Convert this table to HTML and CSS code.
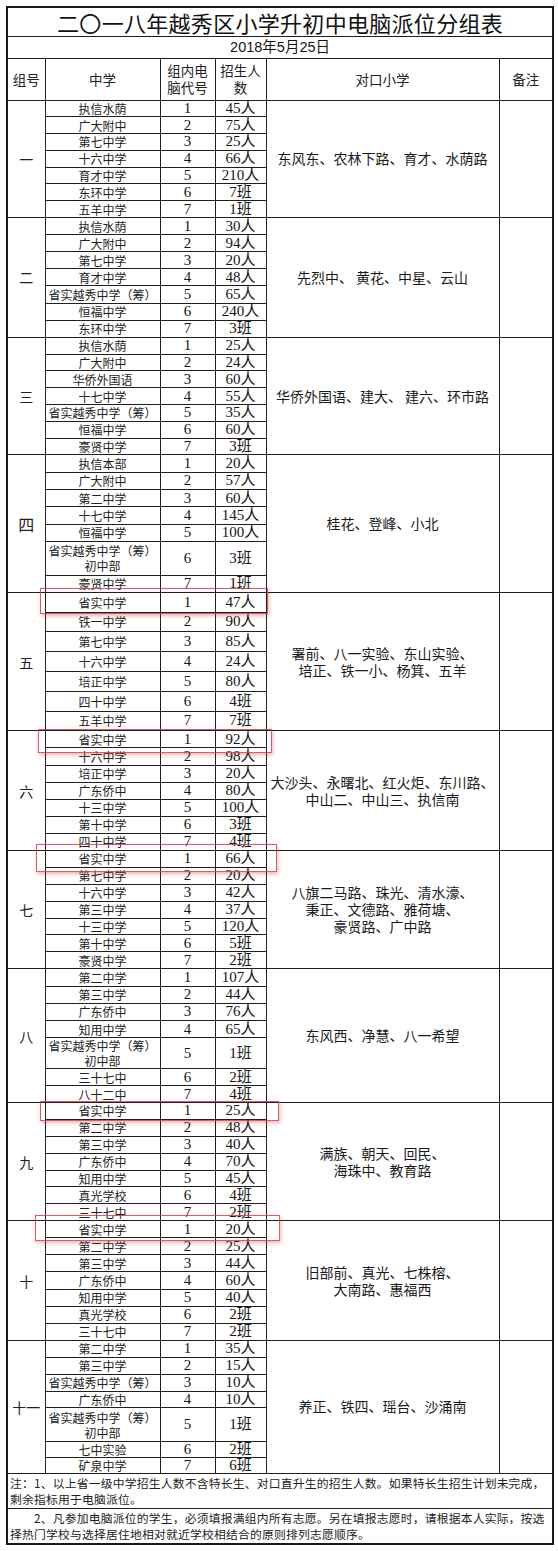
FILE: index.html
```html
<!DOCTYPE html>
<html lang="zh-CN">
<head>
<meta charset="utf-8">
<title>二〇一八年越秀区小学升初中电脑派位分组表</title>
<link rel="stylesheet" href="styles.css">
</head>
<body>
<div class="sheet">
<table class="grid">
<colgroup>
<col class="c-grp"><col class="c-school"><col class="c-code"><col class="c-num"><col class="c-primary"><col class="c-note">
</colgroup>
<thead>
<tr class="title-row"><th colspan="6" class="title">二〇一八年越秀区小学升初中电脑派位分组表</th></tr>
<tr class="date-row"><th colspan="6" class="date">2018年5月25日</th></tr>
<tr class="head-row">
<th>组号</th><th>中学</th><th>组内电<br>脑代号</th><th>招生人<br>数</th><th>对口小学</th><th>备注</th>
</tr>
</thead>
<tbody class="g1">
<tr><td rowspan="7" class="gl">一</td><td class="sc">执信水荫</td><td class="cd">1</td><td class="nm">45人</td><td rowspan="7" class="pr">东风东、农林下路、育才、水荫路</td><td rowspan="7"></td></tr>
<tr><td class="sc">广大附中</td><td class="cd">2</td><td class="nm">75人</td></tr>
<tr><td class="sc">第七中学</td><td class="cd">3</td><td class="nm">25人</td></tr>
<tr><td class="sc">十六中学</td><td class="cd">4</td><td class="nm">66人</td></tr>
<tr><td class="sc">育才中学</td><td class="cd">5</td><td class="nm">210人</td></tr>
<tr><td class="sc">东环中学</td><td class="cd">6</td><td class="nm">7班</td></tr>
<tr><td class="sc">五羊中学</td><td class="cd">7</td><td class="nm">1班</td></tr>
</tbody>
<tbody class="g2">
<tr><td rowspan="7" class="gl">二</td><td class="sc">执信水荫</td><td class="cd">1</td><td class="nm">30人</td><td rowspan="7" class="pr">先烈中、 黄花、中星、云山</td><td rowspan="7"></td></tr>
<tr><td class="sc">广大附中</td><td class="cd">2</td><td class="nm">94人</td></tr>
<tr><td class="sc">第七中学</td><td class="cd">3</td><td class="nm">20人</td></tr>
<tr><td class="sc">育才中学</td><td class="cd">4</td><td class="nm">48人</td></tr>
<tr><td class="sc">省实越秀中学（筹）</td><td class="cd">5</td><td class="nm">65人</td></tr>
<tr><td class="sc">恒福中学</td><td class="cd">6</td><td class="nm">240人</td></tr>
<tr><td class="sc">东环中学</td><td class="cd">7</td><td class="nm">3班</td></tr>
</tbody>
<tbody class="g3">
<tr><td rowspan="7" class="gl">三</td><td class="sc">执信水荫</td><td class="cd">1</td><td class="nm">25人</td><td rowspan="7" class="pr">华侨外国语、建大、 建六、环市路</td><td rowspan="7"></td></tr>
<tr><td class="sc">广大附中</td><td class="cd">2</td><td class="nm">24人</td></tr>
<tr><td class="sc">华侨外国语</td><td class="cd">3</td><td class="nm">60人</td></tr>
<tr><td class="sc">十七中学</td><td class="cd">4</td><td class="nm">55人</td></tr>
<tr><td class="sc">省实越秀中学（筹）</td><td class="cd">5</td><td class="nm">35人</td></tr>
<tr><td class="sc">恒福中学</td><td class="cd">6</td><td class="nm">60人</td></tr>
<tr><td class="sc">豪贤中学</td><td class="cd">7</td><td class="nm">3班</td></tr>
</tbody>
<tbody class="g4">
<tr><td rowspan="7" class="gl big">四</td><td class="sc">执信本部</td><td class="cd">1</td><td class="nm">20人</td><td rowspan="7" class="pr">桂花、登峰、小北</td><td rowspan="7"></td></tr>
<tr><td class="sc">广大附中</td><td class="cd">2</td><td class="nm">57人</td></tr>
<tr><td class="sc">第二中学</td><td class="cd">3</td><td class="nm">60人</td></tr>
<tr><td class="sc">十七中学</td><td class="cd">4</td><td class="nm">145人</td></tr>
<tr><td class="sc">恒福中学</td><td class="cd">5</td><td class="nm">100人</td></tr>
<tr class="dbl"><td class="sc">省实越秀中学（筹）<br>初中部</td><td class="cd">6</td><td class="nm">3班</td></tr>
<tr class="end"><td class="sc">豪贤中学</td><td class="cd">7</td><td class="nm">1班</td></tr>
</tbody>
<tbody class="g5">
<tr><td rowspan="7" class="gl">五</td><td class="sc">省实中学</td><td class="cd">1</td><td class="nm">47人</td><td rowspan="7" class="pr">署前、八一实验、东山实验、<br>培正、铁一小、杨箕、五羊</td><td rowspan="7"></td></tr>
<tr><td class="sc">铁一中学</td><td class="cd">2</td><td class="nm">90人</td></tr>
<tr><td class="sc">第七中学</td><td class="cd">3</td><td class="nm">85人</td></tr>
<tr><td class="sc">十六中学</td><td class="cd">4</td><td class="nm">24人</td></tr>
<tr><td class="sc">培正中学</td><td class="cd">5</td><td class="nm">80人</td></tr>
<tr><td class="sc">四十中学</td><td class="cd">6</td><td class="nm">4班</td></tr>
<tr><td class="sc">五羊中学</td><td class="cd">7</td><td class="nm">7班</td></tr>
</tbody>
<tbody class="g6">
<tr><td rowspan="7" class="gl">六</td><td class="sc">省实中学</td><td class="cd">1</td><td class="nm">92人</td><td rowspan="7" class="pr">大沙头、永曙北、红火炬、东川路、<br>中山二、中山三、执信南</td><td rowspan="7"></td></tr>
<tr><td class="sc">十六中学</td><td class="cd">2</td><td class="nm">98人</td></tr>
<tr><td class="sc">培正中学</td><td class="cd">3</td><td class="nm">20人</td></tr>
<tr><td class="sc">广东侨中</td><td class="cd">4</td><td class="nm">80人</td></tr>
<tr><td class="sc">十三中学</td><td class="cd">5</td><td class="nm">100人</td></tr>
<tr><td class="sc">第十中学</td><td class="cd">6</td><td class="nm">3班</td></tr>
<tr><td class="sc">四十中学</td><td class="cd">7</td><td class="nm">4班</td></tr>
</tbody>
<tbody class="g7">
<tr><td rowspan="7" class="gl">七</td><td class="sc">省实中学</td><td class="cd">1</td><td class="nm">66人</td><td rowspan="7" class="pr">八旗二马路、珠光、清水濠、<br>秉正、文德路、雅荷塘、<br>豪贤路、广中路</td><td rowspan="7"></td></tr>
<tr><td class="sc">第七中学</td><td class="cd">2</td><td class="nm">20人</td></tr>
<tr><td class="sc">十六中学</td><td class="cd">3</td><td class="nm">42人</td></tr>
<tr><td class="sc">第三中学</td><td class="cd">4</td><td class="nm">37人</td></tr>
<tr><td class="sc">十三中学</td><td class="cd">5</td><td class="nm">120人</td></tr>
<tr><td class="sc">第十中学</td><td class="cd">6</td><td class="nm">5班</td></tr>
<tr><td class="sc">豪贤中学</td><td class="cd">7</td><td class="nm">2班</td></tr>
</tbody>
<tbody class="g8">
<tr><td rowspan="7" class="gl">八</td><td class="sc">第二中学</td><td class="cd">1</td><td class="nm">107人</td><td rowspan="7" class="pr">东风西、净慧、八一希望</td><td rowspan="7"></td></tr>
<tr><td class="sc">第三中学</td><td class="cd">2</td><td class="nm">44人</td></tr>
<tr><td class="sc">广东侨中</td><td class="cd">3</td><td class="nm">76人</td></tr>
<tr><td class="sc">知用中学</td><td class="cd">4</td><td class="nm">65人</td></tr>
<tr class="dbl"><td class="sc">省实越秀中学（筹）<br>初中部</td><td class="cd">5</td><td class="nm">1班</td></tr>
<tr class="end"><td class="sc">三十七中</td><td class="cd">6</td><td class="nm">2班</td></tr>
<tr class="end"><td class="sc">八十二中</td><td class="cd">7</td><td class="nm">4班</td></tr>
</tbody>
<tbody class="g9">
<tr><td rowspan="7" class="gl">九</td><td class="sc">省实中学</td><td class="cd">1</td><td class="nm">25人</td><td rowspan="7" class="pr">满族、朝天、回民、<br>海珠中、教育路</td><td rowspan="7"></td></tr>
<tr><td class="sc">第二中学</td><td class="cd">2</td><td class="nm">48人</td></tr>
<tr><td class="sc">第三中学</td><td class="cd">3</td><td class="nm">40人</td></tr>
<tr><td class="sc">广东侨中</td><td class="cd">4</td><td class="nm">70人</td></tr>
<tr><td class="sc">知用中学</td><td class="cd">5</td><td class="nm">45人</td></tr>
<tr><td class="sc">真光学校</td><td class="cd">6</td><td class="nm">4班</td></tr>
<tr><td class="sc">三十七中</td><td class="cd">7</td><td class="nm">2班</td></tr>
</tbody>
<tbody class="g10">
<tr><td rowspan="7" class="gl">十</td><td class="sc">省实中学</td><td class="cd">1</td><td class="nm">20人</td><td rowspan="7" class="pr">旧部前、真光、七株榕、<br>大南路、惠福西</td><td rowspan="7"></td></tr>
<tr><td class="sc">第二中学</td><td class="cd">2</td><td class="nm">25人</td></tr>
<tr><td class="sc">第三中学</td><td class="cd">3</td><td class="nm">44人</td></tr>
<tr><td class="sc">广东侨中</td><td class="cd">4</td><td class="nm">60人</td></tr>
<tr><td class="sc">知用中学</td><td class="cd">5</td><td class="nm">40人</td></tr>
<tr><td class="sc">真光学校</td><td class="cd">6</td><td class="nm">2班</td></tr>
<tr><td class="sc">三十七中</td><td class="cd">7</td><td class="nm">2班</td></tr>
</tbody>
<tbody class="g11">
<tr><td rowspan="7" class="gl">十一</td><td class="sc">第二中学</td><td class="cd">1</td><td class="nm">35人</td><td rowspan="7" class="pr">养正、铁四、瑶台、沙涌南</td><td rowspan="7"></td></tr>
<tr><td class="sc">第三中学</td><td class="cd">2</td><td class="nm">15人</td></tr>
<tr><td class="sc">省实越秀中学（筹）</td><td class="cd">3</td><td class="nm">10人</td></tr>
<tr><td class="sc">广东侨中</td><td class="cd">4</td><td class="nm">10人</td></tr>
<tr class="dbl"><td class="sc">省实越秀中学（筹）<br>初中部</td><td class="cd">5</td><td class="nm">1班</td></tr>
<tr class="end"><td class="sc">七中实验</td><td class="cd">6</td><td class="nm">2班</td></tr>
<tr class="end"><td class="sc">矿泉中学</td><td class="cd">7</td><td class="nm">6班</td></tr>
</tbody>
<tfoot>
<tr class="note-row"><td colspan="6" class="note">注：1、以上省一级中学招生人数不含特长生、对口直升生的招生人数。如果特长生招生计划未完成，<br>剩余指标用于电脑派位。</td></tr>
<tr class="note-row"><td colspan="6" class="note">　　2、凡参加电脑派位的学生，必须填报满组内所有志愿。另在填报志愿时，请根据本人实际，按选<br>择热门学校与选择居住地相对就近学校相结合的原则排列志愿顺序。</td></tr>
</tfoot>
</table>
<div class="mark mark-5"></div>
<div class="mark mark-6"></div>
<div class="mark mark-7"></div>
<div class="mark mark-9"></div>
<div class="mark mark-10"></div>
</div>
</body>
</html>
```
FILE: styles.css
```css
html, body {
  margin: 0;
  padding: 0;
  background: #ffffff;
}

body {
  font-family: "Liberation Serif", "Noto Sans CJK SC", serif;
  color: #151515;
}

.sheet {
  position: relative;
  width: 558px;
  padding: 6px 0 0 6px;
  box-sizing: border-box;
}

.grid {
  border-collapse: collapse;
  table-layout: fixed;
  width: 546px;
  border: 2px solid #1a1a1a;
}

.c-grp { width: 38px; }
.c-school { width: 115px; }
.c-code { width: 55px; }
.c-num { width: 51px; }
.c-primary { width: 233px; }
.c-note { width: 54px; }

.grid th,
.grid td {
  border: 1px solid #1f1f1f;
  padding: 0;
  text-align: center;
  vertical-align: middle;
  overflow: hidden;
  white-space: nowrap;
}

.grid th {
  font-family: "Noto Sans CJK SC", sans-serif;
  font-weight: normal;
}

.title-row { height: 29px; }
.grid th.title {
  font-size: 22px;
  line-height: 24px;
  letter-spacing: 0.3px;
  color: #111;
  overflow: visible;
}

.date-row { height: 22px; }
.date {
  font-size: 14.5px;
  line-height: 1;
}
.date-row th { font-family: "Liberation Sans Narrow", "Liberation Sans", "Noto Sans CJK SC", sans-serif; }

.head-row { height: 42px; }
.head-row th {
  font-size: 13.5px;
  line-height: 17px;
  color: #222;
}

.gl {
  font-family: "Noto Sans CJK SC", sans-serif;
  font-size: 14px;
  color: #222;
}
.gl.big { font-size: 16px; }

.sc {
  font-family: "Noto Sans CJK SC", sans-serif;
  font-size: 12px;
  line-height: 15px;
  color: #222;
}

.cd {
  font-size: 15px;
  line-height: 1;
}

.nm {
  font-size: 15px;
  line-height: 1;
}

.pr {
  font-family: "Noto Sans CJK SC", sans-serif;
  font-size: 14px;
  line-height: 17px;
  color: #1a1a1a;
}

.g1 tr { height: 16.8px; }
.g2 tr { height: 17.1px; }
.g3 tr { height: 16.8px; }
.g4 tr { height: 17.3px; }
.g4 tr.dbl { height: 34.3px; }
.g4 tr.end { height: 16.7px; }
.g5 tr { height: 19.8px; }
.g6 tr { height: 17.1px; }
.g7 tr { height: 16.9px; }
.g8 tr { height: 17.25px; }
.g8 tr.dbl { height: 31px; }
.g8 tr.end { height: 16.85px; }
.g9 tr { height: 16.9px; }
.g10 tr { height: 17.1px; }
.g11 tr { height: 16.9px; }
.g11 tr.dbl { height: 33.3px; }
.g11 tr.end { height: 16.2px; }

.note-row { height: 35px; }
.grid td.note {
  text-align: left;
  font-family: "Noto Sans CJK SC", sans-serif;
  font-size: 11.8px;
  letter-spacing: 0.2px;
  line-height: 16px;
  padding-left: 2px;
  color: #222;
}

.mark {
  position: absolute;
  border: 1.5px solid rgba(214, 62, 74, 0.85);
  box-shadow: 1px 2px 4px rgba(190, 40, 50, 0.35);
  pointer-events: none;
}
.mark-5 { left: 40px; top: 588px; width: 226px; height: 24px; }
.mark-6 { left: 38px; top: 729px; width: 232px; height: 22px; }
.mark-7 { left: 36px; top: 844px; width: 239px; height: 26px; }
.mark-9 { left: 40px; top: 1101px; width: 237px; height: 18px; }
.mark-10 { left: 35px; top: 1215px; width: 243px; height: 24px; }
```
